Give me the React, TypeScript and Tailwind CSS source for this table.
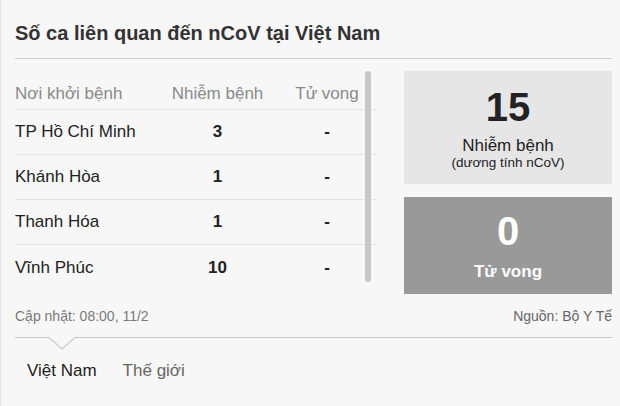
const ROWS = [
  { name: "TP Hồ Chí Minh", cases: "3", deaths: "-" },
  { name: "Khánh Hòa", cases: "1", deaths: "-" },
  { name: "Thanh Hóa", cases: "1", deaths: "-" },
  { name: "Vĩnh Phúc", cases: "10", deaths: "-" },
];

export default function App() {
  return (
    <div
      className="w-[620px] h-[406px] overflow-hidden bg-[#f7f7f7] border-l border-[#e6e6e6] pl-[14px] pr-[8px]"
      style={{ fontFamily: '"Liberation Sans", Arial, sans-serif' }}
    >
      {/* Title */}
      <h2 className="pt-[21px] pb-[13px] border-b border-[#cccccc] text-[20px] leading-[24px] font-bold text-[#333333]">
        Số ca liên quan đến nCoV tại Việt Nam
      </h2>

      <div className="flex gap-[28px] mt-[12px]">
        {/* Table */}
        <div className="relative w-[361px] h-[223px]">
          <div className="flex h-[39px] pt-[13px] border-b border-[#e3e3e3] text-[17px] leading-[20px] text-[#8a8a8a]">
            <div className="w-[150px]">Nơi khởi bệnh</div>
            <div className="w-[105px] text-center">Nhiễm bệnh</div>
            <div className="w-[106px] text-center pl-[8px]">Tử vong</div>
          </div>
          {ROWS.map((r, i) => (
            <div
              key={r.name}
              className={`flex items-center h-[45px] text-[17px] text-[#222222] ${
                i < ROWS.length - 1 ? "border-b border-[#e3e3e3]" : ""
              }`}
            >
              <div className="w-[150px]">{r.name}</div>
              <div className="w-[105px] text-center font-bold">{r.cases}</div>
              <div className="w-[106px] text-center pl-[8px] font-bold">{r.deaths}</div>
            </div>
          ))}
          {/* scrollbar */}
          <div className="absolute right-[5px] top-0 w-[6px] h-[211px] rounded-full bg-[#c8c8c8]" />
        </div>

        {/* Summary boxes */}
        <div className="w-[208px] flex flex-col gap-[13px]">
          <div className="h-[113px] bg-[#e6e6e6] flex flex-col items-center pt-[16px] text-[#222222]">
            <div className="text-[40px] leading-[40px] font-bold">15</div>
            <div className="mt-[10px] text-[17px] leading-[18px]">Nhiễm bệnh</div>
            <div className="text-[13.5px] leading-[15px]">(dương tính nCoV)</div>
          </div>
          <div className="h-[97px] bg-[#999999] flex flex-col items-center pt-[14px] text-white">
            <div className="text-[40px] leading-[40px] font-bold">0</div>
            <div className="mt-[11px] text-[17px] leading-[20px] font-bold">Tử vong</div>
          </div>
        </div>
      </div>

      {/* Footer */}
      <div className="flex justify-between mt-[14px] pb-[13px] border-b border-[#c8c8c8] text-[14px] leading-[16px]">
        <span className="text-[#7a7a7a]">Cập nhật: 08:00, 11/2</span>
        <span className="text-[#666666]">Nguồn: Bộ Y Tế</span>
      </div>

      {/* Tabs */}
      <div className="relative flex gap-[26px] pl-[12px] pt-[23px] text-[17px] leading-[20px]">
        <svg
          className="absolute left-[34px] top-[-1px]"
          width="26"
          height="13"
          viewBox="0 0 26 13"
        >
          <polygon points="0,0 13,12 26,0" fill="#f7f7f7" />
          <polyline points="0,0.5 13,12 26,0.5" fill="none" stroke="#c8c8c8" strokeWidth="1.2" />
        </svg>
        <span className="text-[#222222]">Việt Nam</span>
        <span className="text-[#666666]">Thế giới</span>
      </div>
    </div>
  );
}
